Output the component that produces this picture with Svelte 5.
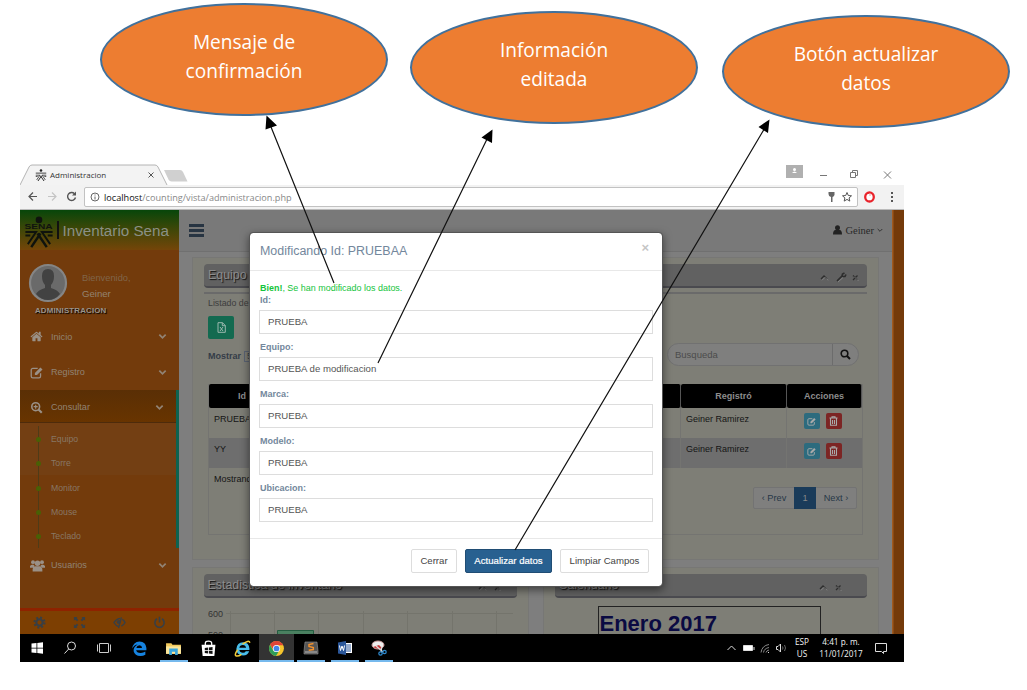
<script>
  const callouts = [
    { x: 100, y: 3, lines: ['Mensaje de', 'confirmación'], shift: -6 },
    { x: 410, y: 11, lines: ['Información', 'editada'], shift: -6 },
    { x: 722, y: 15, lines: ['Botón actualizar', 'datos'], shift: -6 }
  ];
  const fields = [
    ['Id:', 'PRUEBA'],
    ['Equipo:', 'PRUEBA de modificacion'],
    ['Marca:', 'PRUEBA'],
    ['Modelo:', 'PRUEBA'],
    ['Ubicacion:', 'PRUEBA']
  ];
  const sub = ['Equipo', 'Torre', 'Monitor', 'Mouse', 'Teclado'];
  const rows = ['PRUEBA', 'YY'];
</script>

{#snippet edit()}
  <path d="M13 9v3.500a2 2 0 0 1-2 2H3.500a2 2 0 0 1-2-2V5a2 2 0 0 1 2-2H9.500" fill="none" stroke="currentColor" stroke-width="1.600" /><path d="M6 8.500 12.800 1.700l2.600 2.600L8.600 11H6z" fill="currentColor" />
{/snippet}
{#snippet chevron()}
  <svg class="chev" viewBox="0 0 10 10"><path d="M1.500 3 5 6.500 8.500 3" fill="none" stroke="currentColor" stroke-width="1.900" /></svg>
{/snippet}
{#snippet sena()}
  <g fill="none" stroke="currentColor" stroke-width="2"><path d="M1 16.500h11L3.500 29M29 16.500H18L26.500 29M1 20h5M24 20h5" /><path d="M16.500 18 7 32M13.500 18l9.500 14" stroke-width="2.500" /></g><circle cx="15" cy="4" r="3.400" fill="currentColor" />
{/snippet}
{#snippet tools()}
  <svg width="40" height="12" viewBox="0 0 40 12" fill="none" stroke="#2d2d2d" stroke-width="1.300"><path d="m2 8 3-3 3 3M18 4.500l4.500 4.500m0-4.500L18 9" /><path d="m3 9.300 3-3 3 3M19 5.500l4.500 4.500" stroke="#9a9a9a" stroke-width=".6" /></svg>
{/snippet}

<div class="sheet">
  <div class="window">
    <div class="tabs">
      <svg class="tabshape" viewBox="0 0 170 22"><path d="M0 22 9 4q1-2 3-2h123q2 0 3 2l9 18" fill="#f3f3f3" stroke="#b4b4b4" /><path d="M144 7h16q2 0 3 2l4.500 9.500h-16q-2 0-3-2z" fill="#d0d0d0" /></svg>
      <div class="tab"><svg width="12" height="12" viewBox="0 0 30 32" color="#222">{@render sena()}<path d="M1 11h28" stroke="#555" stroke-width="3" /></svg><span class="tabname">Administracion</span><svg class="tabx" width="6" height="6" viewBox="0 0 6 6"><path d="M.5.5l5 5m0-5-5 5" stroke="#555" /></svg></div>
      <div class="wincontrols">
        <svg class="person" width="17" height="13" viewBox="0 0 17 13"><path fill="#b0b0b0" d="M0 0h17v13H0z" /><circle cx="8.500" cy="4.500" r="1.500" fill="#fff" /><path d="M6 8q2.500-3 5 0z" fill="#fff" /></svg>
        <svg width="80" height="13" viewBox="0 0 80 13" fill="none" stroke="#777"><path d="M0 7.500h7M30.500 4.500h5v5h-5zM32.500 4.500v-2h5v5h-2M64 3.500l7 7m0-7-7 7" /></svg>
      </div>
    </div>

    <div class="toolbar">
      <svg class="nav" width="60" height="16" viewBox="0 0 60 16" fill="none" stroke-width="1.200"><path d="M12 7.500H4m4-4-4 4 4 4" stroke="#555" /><path d="M23 7.500h8m-4-4 4 4-4 4" stroke="#c4c4c4" /><path d="M49.500 4.700A4 4 0 1 0 50.500 8.500" stroke="#555" stroke-width="1.400" /><path d="M51 2.500v4h-4z" fill="#555" /></svg>
      <div class="address">
        <svg width="10" height="10" viewBox="0 0 10 10" fill="none" stroke="#666"><circle cx="5" cy="5" r="4" /><path d="M5 4.500V7.500M5 2.500v1" /></svg>
        <span class="url"><b>localhost</b>/counting/vista/administracion.php</span>
        <svg class="stars" width="27" height="12" viewBox="0 0 27 12"><path d="M1.500 1h6v3q-1 2-2 2v5H4V6Q1.500 5.500 1.500 3z" fill="#666" /><path d="m20 1.500 1.300 3 3.200.3-2.400 2.100.7 3.200L20 8.400l-2.800 1.700.7-3.200-2.400-2.100 3.200-.3z" fill="none" stroke="#555" /></svg>
      </div>
      <svg width="36" height="14" viewBox="0 0 36 14"><ellipse cx="6.500" cy="7" rx="4.300" ry="4.500" fill="#fff" stroke="#e9232b" stroke-width="2.300" /><path d="M7 3v3" stroke="#e9a0a0" stroke-width="1" /><g fill="#555"><path d="M28 2h2v2h-2zM28 6h2v2h-2zM28 10h2v2h-2z" /></g></svg>
    </div>

    <div class="page">
      <aside>
        <div class="brand"><svg width="30" height="34" viewBox="0 0 30 34"><g color="#0f130d">{@render sena()}</g><text x="0" y="13.500" textLength="29" lengthAdjust="spacingAndGlyphs" font-size="8" font-weight="bold" fill="#10130f">SENA</text></svg><i></i><span>Inventario Sena</span></div>
        <div class="profile">
          <div class="who">
            <svg width="40" height="40" viewBox="0 0 40 40"><circle cx="20" cy="20" r="18" fill="#6a6a6a" stroke="#858585" stroke-width="2.200" /><path d="M14 13q0-7 6-7t6 7q0 6-3 9v3q7 2 9 6-5 6-12 6T8 31q2-4 9-6v-3q-3-3-3-9" fill="#424242" /></svg>
            <div><span>Bienvenido,</span><b>Geiner</b></div>
          </div>
          <strong>ADMINISTRACION</strong>
        </div>
        <div class="item"><svg viewBox="0 0 1792 1792"><path fill="currentColor" d="M1472 992v480q0 26-19 45t-45 19h-384v-384h-256v384h-384q-26 0-45-19t-19-45v-480q0-1 .5-3t.5-3l575-474 575 474q1 2 1 6zm223-69l-62 74q-8 9-21 11h-3q-13 0-21-7l-692-577-692 577q-12 8-24 7-13-2-21-11l-62-74q-8-10-7-23.500t11-21.500l719-599q32-26 76-26t76 26l244 204v-195q0-14 9-23t23-9h192q14 0 23 9t9 23v408l219 182q10 8 11 21.500t-7 23.500z" /></svg><span>Inicio</span>{@render chevron()}</div>
        <div class="item"><svg viewBox="0 0 16 16">{@render edit()}</svg><span>Registro</span>{@render chevron()}</div>
        <div class="open">
          <div class="item current"><svg viewBox="0 0 16 16" fill="none" stroke="currentColor"><circle cx="7" cy="7" r="4.800" stroke-width="2" /><path d="m10.500 10.500 4 4" stroke-width="2.600" /><path d="M4.500 7h5M7 4.500v5" stroke-width="1.400" /></svg><span>Consultar</span>{@render chevron()}</div>
          <ul>{#each sub as s}<li>{s}</li>{/each}</ul>
        </div>
        <div class="item users"><svg class="wide" viewBox="0 0 20 16" fill="currentColor"><circle cx="4" cy="3.500" r="2.600" /><circle cx="16" cy="3.500" r="2.600" /><circle cx="10" cy="5" r="3.700" /><path d="M0 11V8.500Q1 6.500 4 6.500l2 1.500-1.500 3zM20 11V8.500q-1-2-4-2L14 8l1.500 3zM3.500 16q-.5-7 3.500-7h6q4 0 3.500 7z" /></svg><span>Usuarios</span>{@render chevron()}</div>
        <div class="sidefoot">
          <svg viewBox="0 0 14 14" fill="none" stroke="currentColor"><circle cx="7" cy="7" r="3.400" stroke-width="2.200" /><circle cx="7" cy="7" r="5.400" stroke-width="2.200" stroke-dasharray="2.120 2.120" /></svg>
          <svg viewBox="0 0 14 14" fill="currentColor"><path d="M1 1h4L3.800 2.200l2 2-1.500 1.500-2-2L1 5zM13 1v4l-1.200-1.300-2 2-1.500-1.500 2-2L9 1zM1 13V9l1.200 1.300 2-2 1.500 1.500-2 2L5 13zM13 13H9l1.300-1.200-2-2 1.500-1.500 2 2L13 9z" /></svg>
          <svg viewBox="0 0 14 14" fill="none" stroke="currentColor"><path d="M7.500 2.500Q3.500 3 1 7q2 3.500 5 4.300M10 3.500Q12 5 13 7q-1.500 2.800-4 4M9 1.500 6 13" stroke-width="1.500" /><circle cx="6" cy="6.500" r="1.600" fill="currentColor" /></svg>
          <svg viewBox="0 0 14 14" fill="none" stroke="currentColor" stroke-width="1.700"><path d="M4.300 3A5 5 0 1 0 9.700 3M7 .8V7" /></svg>
        </div>
      </aside>

      <main>
        <header>
          <div class="burger"><i></i><i></i><i></i></div>
          <div class="account"><svg width="9" height="10" viewBox="0 0 9 10" fill="#222"><circle cx="4.500" cy="2.800" r="2.500" /><path d="M0 9.500Q0 5 2.500 5h4Q9 5 9 9.500z" /></svg>Geiner<svg width="6" height="6" viewBox="0 0 6 6"><path d="M.7 2 3 4.300 5.300 2" fill="none" stroke="#333" /></svg></div>
        </header>

        <section class="panel first">
          <div class="title"><span>Equipo</span>
            <svg width="42" height="12" viewBox="0 0 42 12" fill="none" stroke="#2d2d2d" stroke-width="1.300"><path d="m1 8 3-3 3 3M33 4.500l4.500 4.500m0-4.500L33 9" /><path d="m17 10 5-5 .5-2 2-1M22 5.500h3l1-2" stroke-width="1.600" /><path d="m2 9.300 3-3 3 3M18 11l5-4.500M34 5.500l4.500 4.500" stroke="#9a9a9a" stroke-width=".6" /></svg></div>
          <div class="rule"></div>
          <p class="listing">Listado de</p>
          <div class="excel"><svg width="9" height="11" viewBox="0 0 9 11" fill="none" stroke="#9bb8ae"><path d="M1 .7h4.500L8.300 3.500v6.800H1zM5.300.7v3h3M3 5l3 4M6 5 3 9" /></svg></div>
          <div class="controls">
            <div class="show"><b>Mostrar</b><span class="select">5</span></div>
            <div class="search"><span>Busqueda</span><div><svg width="11" height="11" viewBox="0 0 11 11" fill="none" stroke="#111" stroke-width="1.600"><circle cx="4.500" cy="4.500" r="3.300" /><path d="m7 7 3 3" stroke-width="2" /></svg></div></div>
          </div>
          <div class="table">
            <div class="tr th"><b>Id</b><b></b><b>Registró</b><b>Acciones</b></div>
            {#each rows as r, i}
              <div class="tr" class:alt={i === 1}>
                <span>{r}</span><span></span><span class="name">Geiner Ramirez</span>
                <span class="acts">
                  <i class="blue"><svg width="9" height="9" viewBox="0 0 16 16">{@render edit()}</svg></i>
                  <i class="red"><svg width="9" height="10" viewBox="0 0 9 10" fill="none" stroke="currentColor"><path d="M.5 2h8M3 2V.7h3V2M1.500 2.500v6.800h6V2.500M3.500 4v4M5.500 4v4" stroke-width="1.100" /></svg></i>
                </span>
              </div>
            {/each}
            <div class="tfoot"><span>Mostrando</span><div class="pager"><span>‹ Prev</span><b>1</b><span>Next ›</span></div></div>
          </div>
        </section>

        <div class="pair">
          <section class="panel">
            <div class="title"><span>Estadistica de inventario</span>{@render tools()}</div>
            <div class="chart">
              <svg width="310" height="31" viewBox="0 0 310 31"><path d="M18 10.500h287M22.500 8v23M66.500 8v23M110.500 8v23M155.500 8v23M199.500 8v23M244.500 8v23M288.500 8v23" stroke="#74746c" fill="none" /><path d="M69.500 31v-3.500h36V31" fill="#4a8060" stroke="#245c40" /><text x="0" y="14" font-size="9" fill="#333">600</text><text x="0" y="34.500" font-size="9" fill="#333">500</text></svg>
            </div>
          </section>
          <section class="panel">
            <div class="title"><span>Calendario</span>{@render tools()}</div>
            <div class="calendar">Enero 2017</div>
          </section>
        </div>
      </main>
      <div class="edge"></div>
    </div>

    <div class="taskbar">
      <div class="apps">
        <div><svg viewBox="0 0 16 16"><path d="M2.500 3.500 7.500 3v4.700h-5zM8.300 2.900 14 2.200v5.500H8.300zM2.500 8.400h5V13l-5-.6zM8.300 8.400H14v5.400l-5.700-.7z" fill="#fff" /></svg></div>
        <div><svg viewBox="0 0 16 16" fill="none" stroke="#ddd" stroke-width="1"><circle cx="8.500" cy="6" r="4" /><path d="m5.700 9-4.200 4.500" /></svg></div>
        <div><svg viewBox="0 0 16 16" fill="none" stroke="#ccc"><path d="M2.500 3.500h9v9h-9zM.500 4.500v7M13.500 4.500v7" /></svg></div>
        <div><svg class="big" viewBox="0 0 16 16"><path d="M4.800 9.700h9.700V7.500Q14 1.500 8 1.300 2 1.500 1.200 8q2-3.500 5-3.700Q2 7 2.500 10.500 3.500 15 9 15q2.500 0 4.500-1.200v-3Q11.500 12.300 9 12.200 5.300 12 4.800 9.700m.2-2.200Q5.500 5 8 5q2.300.2 2.400 2.500z" fill="#1683e0" /></svg></div>
        <div class="run"><svg class="big" viewBox="0 0 16 16"><path d="M1 3h5l1 1.500h8V13H1z" fill="#f2c95c" /><path d="M1 6h14v7H1z" fill="#fbe79d" /><path d="M4 8h8v6H9.500v-3h-3v3H4z" fill="#39a5dc" /></svg></div>
        <div><svg class="big" viewBox="0 0 16 16"><path d="M1.500 4.500h13l-1 10.500h-11z" fill="#fff" /><path d="M5 6V3q0-2 3-2t3 2v3" fill="none" stroke="#fff" stroke-width="1.200" /><path d="M4.500 7.500 7.500 7v2.500h-3zM8.300 7l3.500-.5v3H8.300zM4.500 10.200h3v2.500l-3-.4zM8.300 10.200h3.500v3l-3.500-.5z" fill="#111" /></svg></div>
        <div><svg class="big" viewBox="0 0 16 16"><path d="M5 9.500h9.500V8Q14 2.300 8.500 2.200 2.800 2.500 2.200 8.500 2.500 14.500 8.500 14.500q4.500 0 5.800-4h-3.200q-.9 1.700-2.700 1.600Q5.500 12 5 9.500m0-2.100q.5-2.700 3.300-2.700 2.700.1 3.100 2.700z" fill="#48bdea" /><path d="M15 2.500Q14-.5 8 3.800M3.500 9Q0 14 2 15q2 .6 5-1.500" fill="none" stroke="#f3cc3a" stroke-width="1.400" /></svg></div>
        <div class="run active"><svg class="big" viewBox="0 0 16 16"><circle cx="8" cy="8" r="7" fill="#f5c52d" /><path d="M1.900 4.500A7 7 0 0 1 14.300 5H8L5 9z" fill="#df4537" /><path d="M1.900 4.500A7 7 0 0 0 7.500 15l3-5H5z" fill="#2f9d58" /><circle cx="8" cy="8" r="3.400" fill="#fff" /><circle cx="8" cy="8" r="2.700" fill="#4285e8" /></svg></div>
        <div class="run"><svg viewBox="0 0 16 16"><path d="M2 2h12l1 9v3H1v-3z" fill="#555" stroke="#999" stroke-width=".6" /><path d="M2 12h12" stroke="#bbb" /><path d="M10.500 3.500 6 4.500v2l4.300 1v2l-4.600.7" stroke="#f2902c" stroke-width="1.500" fill="none" /></svg></div>
        <div class="run"><svg viewBox="0 0 16 16"><path d="M8 3h7v10H8z" fill="#fff" /><path d="M9 5h5M9 7h5M9 9h5M9 11h5" stroke="#2b579a" /><path d="M1 2.500 9 1v14l-8-1.500z" fill="#2b579a" /><path d="m2.500 5.500 1 5L5 6l1.500 4.500 1-5" stroke="#fff" fill="none" /></svg></div>
        <div class="run"><svg viewBox="0 0 16 16"><ellipse cx="7" cy="5" rx="6" ry="4" fill="#eee" stroke="#c99" /><path d="M2 7q4 3 9 1l-3-3z" fill="#c63b3b" /><path d="m5 6 7 6M11 6l-1 6" stroke="#ddd" stroke-width="1.200" /><circle cx="13.500" cy="12" r="1.700" fill="none" stroke="#2f8bd0" stroke-width="1.200" /><circle cx="9.500" cy="13.500" r="1.700" fill="none" stroke="#2f8bd0" stroke-width="1.200" /></svg></div>
      </div>
      <div class="tray">
        <svg width="64" height="16" viewBox="0 0 64 16" fill="none" stroke="#ddd"><path d="m2.500 10 4-4 4 4" /><path d="M18.500 5.500h9v5h-9z" fill="#fff" /><path d="M29 7v3" /><path d="M36 12.500Q37 5.500 44 4.500M38.500 12.500q.5-4 5.500-5M41 12.500q.5-2 3-2.500" stroke="#888" /><path d="M43 12.500h1" /><path d="M51.500 6.500h1.500l2.500-2.500v8L53 9.500h-1.500z" /><path d="M57.500 6.500q1 1.500 0 3M59.500 5q2 3 0 6" stroke="#666" /></svg>
        <div class="lang"><span>ESP</span><span>US</span></div>
        <div class="clock"><span>4:41 p. m.</span><span>11/01/2017</span></div>
        <svg class="note" width="12" height="12" viewBox="0 0 12 12" fill="none" stroke="#ddd"><path d="M.5 1.500h11v8h-3v2l-2-2h-6z" /></svg>
      </div>
    </div>
  </div>

  <div class="modal">
    <div class="mhead"><span>Modificando Id: PRUEBAA</span><b>×</b></div>
    <div class="mbody">
      <p><b>Bien!</b>, Se han modificado los datos.</p>
      {#each fields as [label, value]}
        <div class="field"><b>{label}</b><div>{value}</div></div>
      {/each}
    </div>
    <div class="mfoot"><span class="c">Cerrar</span><span class="a">Actualizar datos</span><span class="l">Limpiar Campos</span></div>
  </div>

  {#each callouts as c}
    <div class="callout" style="left:{c.x}px;top:{c.y}px;padding-bottom:{-c.shift}px">{#each c.lines as l}<span>{l}</span>{/each}</div>
  {/each}
  <svg class="arrows" width="1027" height="690" viewBox="0 0 1027 690" stroke="#111" stroke-width="1.200">
    <path d="M334 283 269 122M378 363 489 135M515 550 766 126" />
    <path stroke="none" d="M266.500 115.500 277 125.500 265.500 129.500zM492.500 129.500 492 143 481.500 137.500zM769.500 119.500 768 133 758.500 127z" />
  </svg>
</div>

<style>
  :global(body) { margin: 0; background: #fff; }
  * { box-sizing: border-box; }
  .sheet { position: relative; width: 1027px; height: 690px; padding: 163px 0 0 20px; overflow: hidden; font-family: "Liberation Sans", Arial, sans-serif; font-size: 9px; }
  svg { flex: none; display: block; }
  .window { width: 884px; height: 499px; display: flex; flex-direction: column; }
  .tabs { height: 22px; position: relative; display: flex; justify-content: space-between; }
  .tabshape { position: absolute; left: 0; top: 0; width: 170px; height: 22px; }
  .tab { position: relative; display: flex; align-items: center; padding: 1px 0 0 15px; width: 145px; font: 8px "Open Sans", sans-serif; color: #333; }
  .tabname { margin-left: 3px; flex: 1; white-space: nowrap; }
  .tabx { margin-right: 11px; }
  .wincontrols { display: flex; gap: 17px; padding-top: 2px; margin-right: 4px; }
  .wincontrols svg:last-child { margin-top: 3px; }
  .toolbar { height: 25px; background: #f2f2f2; border-bottom: 1px solid #bbb; display: flex; align-items: center; padding-left: 5px; }
  .address { width: 774px; height: 20px; margin-left: -1px; background: #fff; border: 1px solid #c2c2c2; border-radius: 2px; display: flex; align-items: center; padding: 0 3px 0 5px; font: 9.150px "Open Sans", sans-serif; color: #888; }
  .url { margin-left: 4px; flex: 1; white-space: nowrap; }
  .url b { font-weight: 400; color: #111; }
  .toolbar > svg:last-child { margin-left: 5px; }
  .page { height: 424px; display: flex; overflow: hidden; background: #7e7e7e; }

  aside { width: 159px; background: #733b0c; color: #8e8276; display: flex; flex-direction: column; }
  .brand { height: 40px; background: linear-gradient(#07460a, #3b4708 45%, #744509); display: flex; align-items: center; padding-left: 4px; font-size: 15.200px; color: #8b9085; white-space: nowrap; }
  .brand svg { margin-top: 4px; height: 33px; width: 30px; }
  .brand i { width: 1.500px; height: 18px; background: #111; margin: 0 4px 0 3px; }
  .profile { height: 69px; padding-top: 13px; }
  .who { display: flex; padding-left: 8px; gap: 14px; height: 40px; font-size: 9.300px; }
  .who div { padding-top: 7px; line-height: 16px; display: flex; flex-direction: column; color: #80654a; }
  .who b { font-weight: 400; color: #948370; font-size: 9.600px; }
  .profile strong { display: block; padding: 1px 0 0 15px; line-height: 14px; font-size: 7.900px; letter-spacing: .15px; color: #9a948c; text-shadow: 1px 1px 1px #000; }
  .item { height: 35.500px; flex: none; display: flex; align-items: center; padding: 0 12px 0 10px; font-size: 9.100px; color: #918374; }
  .item > svg:first-child { width: 13px; height: 13px; color: #9a9086; }
  .item > svg.wide:first-child { width: 15px; height: 13px; margin-right: -2px; }
  .item span { margin-left: 8px; flex: 1; }
  .chev { width: 9px; height: 9px; }
  .open { border-right: 3px solid #0d6350; }
  .current { height: 33px; padding-top: 2px; background: linear-gradient(#5a2f05, #683400); border-bottom: 1px solid #4e2b0b; }
  ul { margin: 0; padding: 4px 0 0; list-style: none; background: linear-gradient(#733f13 52px, #733b0c 52px); position: relative; }
  ul::before { content: ''; position: absolute; left: 18px; top: 3px; bottom: 0; width: 1px; background: #4f3b17; }
  li { height: 24.300px; line-height: 24px; padding-left: 31px; font-size: 8.700px; color: #887764; position: relative; }
  li::before { content: ''; position: absolute; left: 16px; top: 10px; width: 5px; height: 5px; border-radius: 50%; background: #496005; }
  .users { height: 34px; }
  .sidefoot { margin-top: auto; height: 26px; border-top: 3px solid #8e2300; background: #7d3f02; color: #373f46; display: flex; justify-content: space-around; align-items: center; }
  .sidefoot svg { width: 13px; height: 13px; }

  main { width: 713px; }
  header { height: 42px; background: #797979; border-bottom: 1px solid #707070; display: flex; justify-content: space-between; align-items: center; padding: 0 9px 1px 10px; }
  .burger { display: flex; flex-direction: column; gap: 2px; }
  .burger i { width: 15px; height: 3px; background: #273442; }
  .account { display: flex; align-items: center; gap: 3px; font: 10.500px "Liberation Serif", serif; color: #292929; }
  .panel { background: #7e7e76; border: 1px solid #777775; padding: 6px 11px 0; }
  .first { margin: 5px 13px 0 13px; height: 303px; }
  .title { height: 24px; border-radius: 4px; background: #616161; border-bottom: 2px solid #4a4a4f; padding: 0 5px 0 4px; display: flex; align-items: center; justify-content: space-between; font-size: 12.400px; color: #8c8c8c; text-shadow: 1px 1px 1px #111; white-space: nowrap; }
  .title svg { margin-top: 3px; }
  .rule { height: 2px; margin-top: 4px; background: #6a6a6a; }
  .listing { margin: 3px 4px 0; line-height: 13px; font-size: 8.800px; color: #3d3d3d; }
  .excel { width: 26px; height: 23px; margin: 6px 0 0 4px; border-radius: 2px; background: #136a50; display: grid; place-items: center; }
  .controls { height: 45px; display: flex; justify-content: space-between; padding: 4px 8px 0 4px; }
  .show { display: flex; height: 26px; align-items: center; gap: 3px; color: #343c48; }
  .select { border: 1px solid #5b6474; width: 30px; height: 11px; line-height: 9px; padding-left: 2px; }
  .search { width: 192px; height: 23px; border: 1px solid #717171; border-radius: 12px; background: #7f7f7e; display: flex; align-items: center; padding-left: 7px; color: #4c4c4c; font-size: 9.500px; }
  .search span { flex: 1; }
  .search div { width: 26px; height: 21px; border-left: 1px solid #6c6c6c; display: grid; place-items: center; }
  .table { margin: 0 4px; height: 151px; border: 1px solid #747471; border-top: 0; }
  .tr { height: 30px; display: grid; grid-template-columns: 67px 405px 106px 1fr; color: #151515; }
  .tr > span { padding: 6px 5px; line-height: 11px; border-right: 1px solid #747471; white-space: nowrap; }
  .tr > span:last-child { border: 0; }
  .th { height: 24px; color: #8d8d8d; }
  .th b { background: #000; border-radius: 2px; border-right: 1px solid #555; line-height: 24px; text-align: center; }
  .alt { background: #6e6e6e; }
  .tr > .acts { display: flex; justify-content: center; gap: 6px; padding: 5px 4px 0 0; }
  .acts i { width: 16px; height: 16px; border-radius: 2px; display: grid; place-items: center; color: #aaa; }
  .blue { background: #2d6b7e; }
  .red { background: #7c2524; }
  .tfoot { display: flex; justify-content: space-between; padding: 6px 5px; line-height: 11px; color: #151515; }
  .pager { margin-top: 13px; height: 22px; display: flex; border: 1px solid #737373; border-radius: 2px; line-height: 20px; background: #7f7f7e; color: #273747; font-size: 9.200px; }
  .pager span { width: 40px; text-align: center; }
  .pager b { width: 22px; margin: -1px 0; line-height: 22px; background: #1a3b5a; color: #888; text-align: center; font-weight: 400; }
  .pair { display: flex; gap: 14px; padding: 7px 13px 0 12.500px; }
  .pair .panel { width: 336px; height: 80px; }
  .pair .title { padding-right: 0; }
  .pair .panel:first-child { width: 337px; }
  .pair .panel:last-child .title { padding-right: 9px; }
  .chart { padding: 5px 0 0 4px; }
  .calendar { margin: 8px 0 0 43px; width: 223px; height: 50px; border: 1px solid #222; padding-left: 1px; line-height: 34px; font-size: 22px; font-weight: 700; color: #0a0a42; }
  .edge { width: 12px; background: linear-gradient(90deg, #a05a20 1px, #743a0a 2px); }

  .taskbar { height: 28px; background: #000; display: flex; justify-content: space-between; }
  .apps { display: flex; }
  .apps div { width: 34.200px; display: grid; place-items: center; position: relative; }
  .apps svg { width: 16px; height: 16px; }
  .apps svg.big { width: 17px; height: 17px; }
  .apps .active { background: #333; }
  .run::after { content: ''; position: absolute; left: 3px; right: 3px; bottom: 0; height: 2px; background: #76b9ed; }
  .run.active::after { left: 0; right: 0; }
  .tray { display: flex; align-items: center; padding-right: 2px; color: #f4f4f4; font: 8.200px "Open Sans", sans-serif; }
  .lang, .clock { display: flex; flex-direction: column; text-align: center; line-height: 12.500px; white-space: nowrap; }
  .lang { width: 24px; margin-left: 1px; }
  .clock { width: 46px; margin-left: 4px; }
  .note { margin: 0 15px 0 11px; }

  .modal { position: absolute; left: 249px; top: 232px; width: 414px; height: 355px; background: #fff; border: 1px solid #555; border-radius: 4px; box-shadow: 0 3px 9px rgba(0,0,0,.5); display: flex; flex-direction: column; background-clip: padding-box; }
  .mhead { height: 38px; border-bottom: 1px solid #e8e8e8; display: flex; justify-content: space-between; align-items: center; padding: 0 13px 2px 10px; color: #73879c; font-size: 12.450px; }
  .mhead b { font-size: 13px; color: #c5c5c5; margin-top: -7px; }
  .mbody { padding: 11px 9px 0 9px; }
  .mbody p { margin: 0 0 0 1px; line-height: 12px; color: #14c43c; font-size: 8.960px; }
  .field { height: 40px; margin-bottom: 7px; }
  .field b { display: block; height: 16px; line-height: 13px; padding-left: 1px; color: #73879c; }
  .field div { height: 24px; border: 1px solid #ddd; line-height: 22px; padding-left: 8px; font-size: 9.600px; color: #555; }
  .mfoot { margin-top: auto; height: 48px; border-top: 1px solid #e8e8e8; padding: 10px 13px 0; display: flex; justify-content: flex-end; gap: 8px; }
  .mfoot span { height: 24px; line-height: 22px; border: 1px solid #ddd; border-radius: 2px; text-align: center; color: #444; font-size: 9.600px; white-space: nowrap; }
  .c { width: 46px; } .l { width: 89px; }
  .mfoot .a { width: 87px; background: #286090; border-color: #204d74; color: #fff; -webkit-text-stroke: .2px #fff; }

  .callout { position: absolute; width: 288px; height: 113px; border: 2px solid #41719c; border-radius: 50%; background: #ed7d31; display: flex; flex-direction: column; align-items: center; justify-content: center; color: #fff; font: 19.100px/29px "Open Sans", sans-serif; }
  .arrows { position: absolute; left: 0; top: 0; }
</style>
